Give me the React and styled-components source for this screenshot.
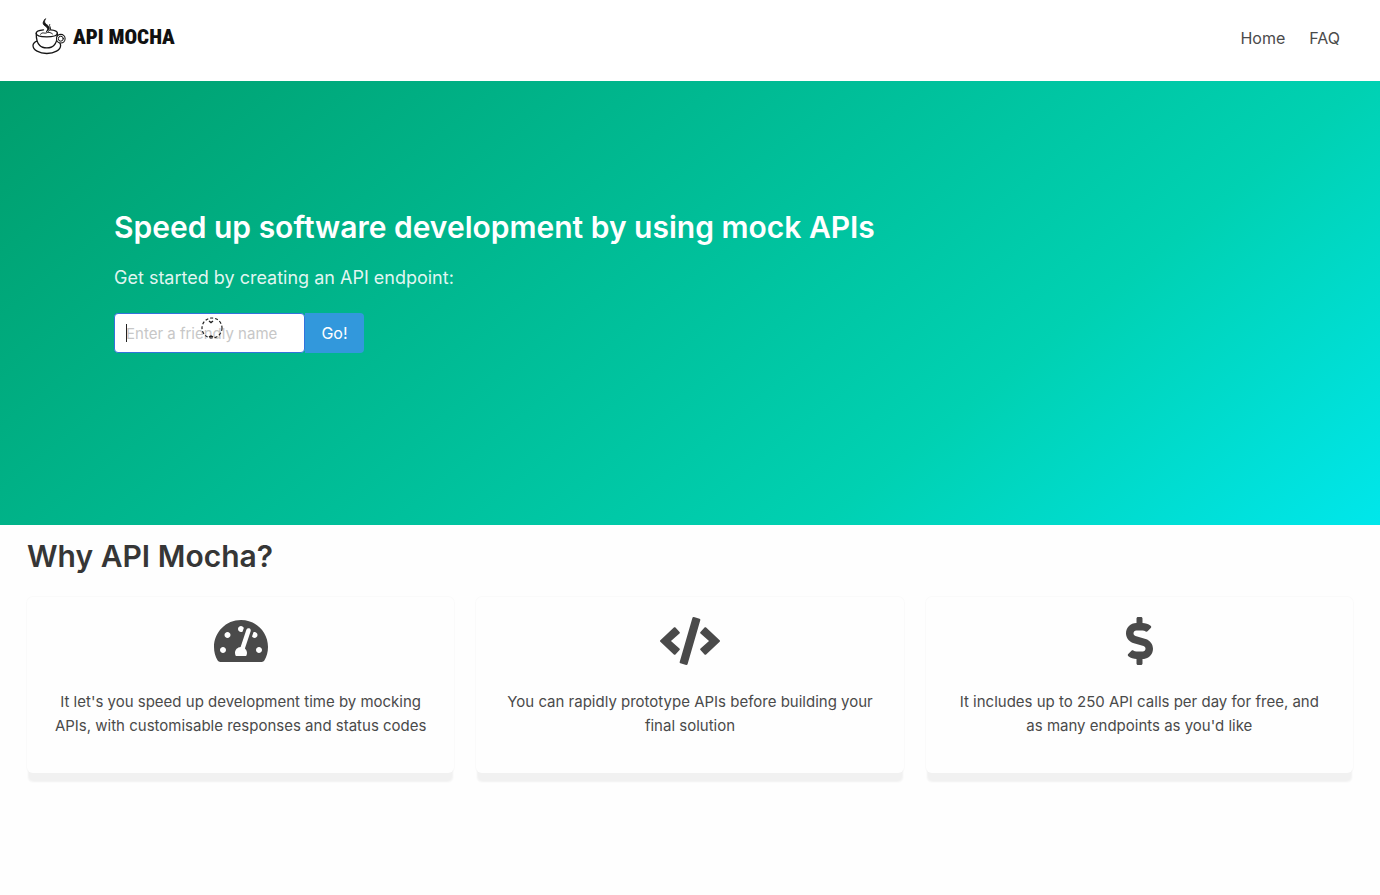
import React from "react";
import styled, { createGlobalStyle } from "styled-components";
import { FaTachometerAlt, FaCode, FaDollarSign } from "react-icons/fa";

const GlobalStyle = createGlobalStyle`
  *, *::before, *::after { box-sizing: border-box; }
  body {
    margin: 0;
    background: #fefefe;
    color: #4a4a4a;
    font-family: Inter, "Liberation Sans", sans-serif;
    font-size: 15px;
    line-height: 24px;
  }
  h1, h2, p { margin: 0; }
`;

const Navbar = styled.header`
  display: flex;
  align-items: center;
  justify-content: space-between;
  min-height: 81px;
  padding: 0 28px 8px 32px;
  background: #fff;
`;

const Brand = styled.a`
  display: flex;
  align-items: center;
  gap: 7px;
  color: #111;
  text-decoration: none;
`;

const Wordmark = styled.span`
  font-family: "Roboto Condensed", "Open Sans Condensed", "Noto Sans ExtraCondensed", Roboto, sans-serif;
  font-size: 21px;
  font-weight: 900;
  line-height: 32px;
  white-space: nowrap;
`;

const NavLinks = styled.nav`
  display: flex;
  padding-top: 2px;
`;

const NavLink = styled.a`
  padding: 8px 12px;
  color: #4a4a4a;
  font-size: 16px;
  line-height: 22px;
  text-decoration: none;
`;

const Hero = styled.section`
  padding: 128px 24px 172px;
  color: #fff;
  background: linear-gradient(141deg, #009e6c 0%, #00d1b2 71%, #00e7eb 100%);
`;

const Container = styled.div`
  max-width: 1152px;
  margin: 0 auto;
`;

const Title = styled.h1`
  font-size: 30px;
  font-weight: 600;
  line-height: 36px;
`;

const Subtitle = styled.p`
  margin: 19px 0 21px;
  font-size: 18px;
  line-height: 28px;
  color: rgba(255, 255, 255, 0.9);
`;

const Form = styled.form`
  display: flex;
`;

const Field = styled.div`
  position: relative;
  width: 191px;
`;

const NameInput = styled.input`
  display: block;
  width: 100%;
  height: 40px;
  padding: 0 11px;
  border: 1px solid #3273dc;
  border-radius: 4px;
  outline: none;
  background: #fff;
  color: #363636;
  font: inherit;
  &::placeholder { color: #c7c7c7; opacity: 1; }
`;

const Caret = styled.span`
  position: absolute;
  left: 12px;
  top: 11px;
  width: 1px;
  height: 18px;
  background: #222;
`;

const Pointer = styled.svg`
  position: absolute;
  left: 86px;
  top: 3px;
  pointer-events: none;
`;

const GoButton = styled.button`
  width: 59px;
  height: 40px;
  padding: 0;
  border: 0;
  border-radius: 0 4px 4px 0;
  background: #3298dc;
  color: #fff;
  font-family: inherit;
  font-size: 16px;
`;

const Reasons = styled.main`
  padding: 13px 27px;
`;

const Heading = styled.h2`
  margin-bottom: 23px;
  color: #363636;
  font-size: 30px;
  font-weight: 600;
  line-height: 36px;
`;

const Cards = styled.div`
  display: grid;
  grid-template-columns: repeat(3, 1fr);
  gap: 22px;
`;

const Card = styled.article`
  display: flex;
  flex-direction: column;
  align-items: center;
  gap: 25px;
  padding: 20px 25px 35px;
  border-radius: 6px;
  background: #fefefe;
  text-align: center;
  box-shadow: 0 10px 2px -1px #f1f1f1, 0 0 0 1px #fafafa;
`;

const Glyph = styled.span`
  display: flex;

  svg {
    width: ${({ $width }) => $width}px;
    height: 48px;
  }
`;

function CupIcon() {
  return (
    <svg width="34" height="38" viewBox="0 0 34 38" fill="none" stroke="#151515" strokeWidth="1.3" strokeLinecap="round" aria-hidden="true">
      <path d="M11.500 11.800C7 12.200 4.200 13.500 4.200 15.200c0 2.300 4.800 3.600 10.600 3.600s10.600-1.300 10.600-3.600c0-1.800-3-3.100-7-3.400" />
      <path d="M4.200 15.200c0 5.200.3 9.300 3.600 12.300 2.800 3.100 11.200 3.100 14 0 3.300-3 3.600-7.100 3.600-12.300" />
      <circle cx="28.800" cy="20.700" r="4.300" fill="#fff" strokeWidth="1.100" />
      <circle cx="28.800" cy="20.700" r="2.500" strokeWidth="1" />
      <path d="M4.800 23.200C2.300 24.300 1 25.800 1 27.500c0 4.500 6.200 8 13.800 8s13.800-3.500 13.800-8c0-.8-.2-1.500-.6-2.100" />
      <path d="M8.500 16.200c1.300-1.500 2.600-1.400 4-1.100 1.700.3 2.600-.9 4.300-.7 1.500.1 2.500.6 3.600 1.500" strokeWidth="1" />
      <path d="M13.300 1c-3.300 3.500-2.500 5.500.2 7.300 2.300 1.500 2.800 3 .8 5.500 4.200-2.500 3.600-5 .8-6.900C12.800 5.300 11.700 4 13.300 1Z" fill="#151515" strokeWidth=".9" />
      <path d="M17.600 6.500c-.8 1.600 1.500 2.700.9 4.500-.3 1-1.100 1.800-2 2.400" strokeWidth=".9" />
    </svg>
  );
}

const reasons = [
  { Icon: FaTachometerAlt, width: 54, text: "It let's you speed up development time by mocking APIs, with customisable responses and status codes" },
  { Icon: FaCode, width: 60, text: "You can rapidly prototype APIs before building your final solution" },
  { Icon: FaDollarSign, width: 27, text: "It includes up to 250 API calls per day for free, and as many endpoints as you'd like" },
];

export default function App() {
  return (
    <>
      <GlobalStyle />
      <Navbar>
        <Brand href="#home">
          <CupIcon />
          <Wordmark>API MOCHA</Wordmark>
        </Brand>
        <NavLinks>
          <NavLink href="#home">Home</NavLink>
          <NavLink href="#faq">FAQ</NavLink>
        </NavLinks>
      </Navbar>
      <Hero>
        <Container>
          <Title>Speed up software development by using mock APIs</Title>
          <Subtitle>Get started by creating an API endpoint:</Subtitle>
          <Form onSubmit={(e) => e.preventDefault()}>
            <Field>
              <NameInput type="text" aria-label="Friendly name" placeholder="Enter a friendly name" />
              <Caret />
              <Pointer width="24" height="24" viewBox="0 0 24 24" fill="none" stroke="#222" aria-hidden="true">
                <circle cx="12" cy="12" r="10" strokeWidth="1.2" strokeDasharray="3 2" />
                <path d="M9 5l2 1.500L13 5M9 21l2-1 2 1" strokeWidth="1.4" />
              </Pointer>
            </Field>
            <GoButton type="submit">Go!</GoButton>
          </Form>
        </Container>
      </Hero>
      <Reasons>
        <Heading>Why API Mocha?</Heading>
        <Cards>
          {reasons.map(({ Icon, width, text }) => (
            <Card key={text}>
              <Glyph $width={width}>
                <Icon aria-hidden="true" />
              </Glyph>
              <p>{text}</p>
            </Card>
          ))}
        </Cards>
      </Reasons>
    </>
  );
}
